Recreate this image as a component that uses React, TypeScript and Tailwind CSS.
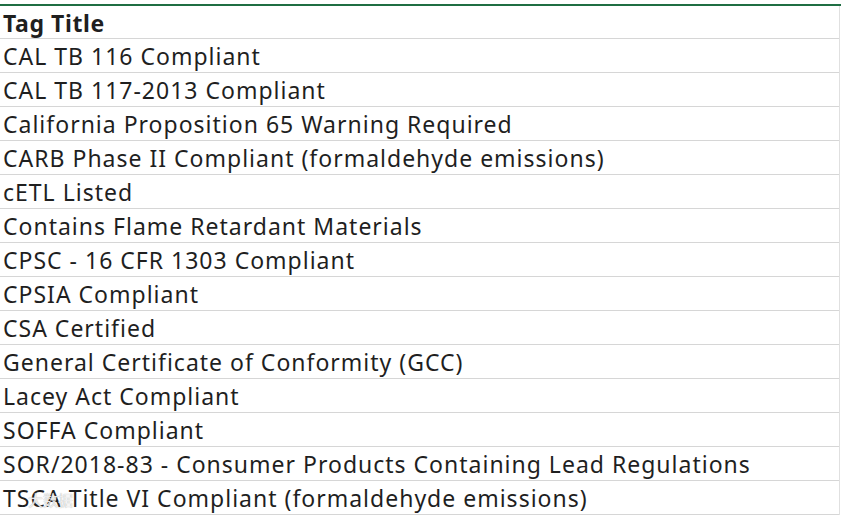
const rows = [
  'CAL TB 116 Compliant',
  'CAL TB 117-2013 Compliant',
  'California Proposition 65 Warning Required',
  'CARB Phase II Compliant (formaldehyde emissions)',
  'cETL Listed',
  'Contains Flame Retardant Materials',
  'CPSC - 16 CFR 1303 Compliant',
  'CPSIA Compliant',
  'CSA Certified',
  'General Certificate of Conformity (GCC)',
  'Lacey Act Compliant',
  'SOFFA Compliant',
  'SOR/2018-83 - Consumer Products Containing Lead Regulations',
  'TSCA Title VI Compliant (formaldehyde emissions)',
]

export default function App() {
  return (
    <div className="relative w-[841px] h-[520px] bg-white overflow-hidden pt-1 font-['Noto_Sans',sans-serif] text-[#1f1f1f]">
      <div className="h-[2px] bg-[#1f6e43]" />
      <div className="border-r border-[#e0e0e0] mr-[1px]">
        <div className="h-[33px] flex items-center pl-[3px] pt-[3px] border-b border-[#d6d6d6] text-[23px] font-bold leading-none tracking-[0.6px]">
          Tag Title
        </div>
        {rows.map((r) => (
          <div
            key={r}
            className="h-[34px] flex items-center pl-[3px] pt-[2px] border-b border-[#d6d6d6] text-[23px] leading-none tracking-[1px]"
          >
            {r}
          </div>
        ))}
      </div>
      {/* watermark */}
      <div className="absolute left-[28px] top-[492px] text-[15px] leading-none text-white/80 font-['Noto_Sans_CJK_SC',sans-serif] [text-shadow:0_0_1px_#999]">
        大数据
      </div>
    </div>
  )
}
